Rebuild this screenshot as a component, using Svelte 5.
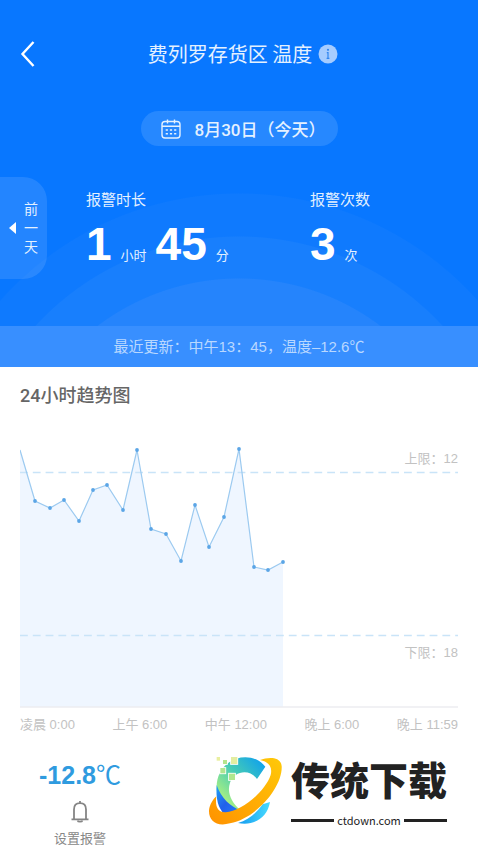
<script lang="ts">
	type Point = { x: number; y: number };

	const points: Point[] = [
		{ x: 0, y: 10 },
		{ x: 15, y: 61 },
		{ x: 30, y: 68 },
		{ x: 44, y: 60 },
		{ x: 59, y: 81 },
		{ x: 73, y: 50 },
		{ x: 87, y: 45 },
		{ x: 103, y: 70 },
		{ x: 117, y: 10 },
		{ x: 131, y: 89 },
		{ x: 146, y: 94 },
		{ x: 161, y: 121 },
		{ x: 175, y: 65 },
		{ x: 189, y: 107 },
		{ x: 204, y: 77 },
		{ x: 219, y: 9 },
		{ x: 234, y: 127 },
		{ x: 248, y: 130 },
		{ x: 263, y: 122 }
	];

	const baseline = 267;
	const times = ['凌晨 0:00', '上午 6:00', '中午 12:00', '晚上 6:00', '晚上 11:59'];

	let line = $derived(points.map((p) => `${p.x},${p.y}`).join(' '));
	let area = $derived(`0,${baseline} ${line} ${points[points.length - 1].x},${baseline}`);
</script>

<main>
	<header>
		<nav>
			<button class="back" aria-label="返回">
				<svg width="16" height="28" viewBox="0 0 16 28">
					<path d="M13.5 2 2.5 14l11 12" fill="none" stroke="#fff" stroke-width="2.4" />
				</svg>
			</button>
			<h1>
				费列罗存货区 温度
				<button class="info" aria-label="说明">
					<svg width="20" height="20" viewBox="0 0 20 20">
						<circle cx="10" cy="10" r="9.5" fill="#a5ccff" />
						<circle cx="10" cy="5.8" r="1.1" fill="#3186f0" />
						<path d="M8.8 8.6H10v5.6M8.6 14.4h2.8" fill="none" stroke="#3186f0" stroke-width="1.2" />
					</svg>
				</button>
			</h1>
		</nav>

		<button class="date">
			<svg width="20" height="20" viewBox="0 0 20 20" fill="none" stroke="#e4f1ff" stroke-width="1.4">
				<rect x="1" y="2.5" width="18" height="16.5" rx="3" />
				<path d="M1 7.2h18M6.5 .5v4M13.5 .5v4" />
				<path d="M4.7 11h2.2m2 0h2.2m2 0h2.2M4.7 14.7h2.2m2 0h2.2m2 0h2.2" stroke-width="1.6" />
			</svg>
			8月30日（今天）
		</button>

		<div class="summary">
			<button class="prev">
				<svg width="7" height="12" viewBox="0 0 7 12"><path d="M7 0v12L0 6z" fill="#fff" /></svg>
				<span>前一天</span>
			</button>
			<dl>
				<div>
					<dt>报警时长</dt>
					<dd><b>1</b><span>小时</span><b>45</b><span>分</span></dd>
				</div>
				<div>
					<dt>报警次数</dt>
					<dd><b>3</b><span>次</span></dd>
				</div>
			</dl>
		</div>

		<p class="updated">最近更新：中午13：45，温度–12.6℃</p>
	</header>

	<section>
		<h2>24小时趋势图</h2>
		<svg class="chart" viewBox="0 0 438 270" role="img" aria-label="24小时趋势图">
			<polygon points={area} fill="#eff6ff" />
			<line class="limit" x1="0" y1="32.5" x2="438" y2="32.5" />
			<line class="limit" x1="0" y1="195.5" x2="438" y2="195.5" />
			<line x1="0" y1={baseline} x2="438" y2={baseline} stroke="#ededf0" stroke-width="1.4" />
			<polyline points={line} fill="none" stroke="#9ccaf0" stroke-width="1.2" />
			{#each points.slice(1) as p}
				<circle cx={p.x} cy={p.y} r="1.9" fill="#5ba5e6" />
			{/each}
			<text x="438" y="23">上限：12</text>
			<text x="438" y="217">下限：18</text>
		</svg>
		<div class="times">
			{#each times as time}
				<span>{time}</span>
			{/each}
		</div>
	</section>

	<footer>
		<div class="current">
			<p><b>-12.8</b>℃</p>
			<button class="alarm">
				<svg width="20" height="24" viewBox="0 0 20 24" fill="none" stroke="#858585" stroke-width="1.8">
					<path d="M4 19V9.5C4 5.5 6.5 3.2 10 3.2s6 2.3 6 6.3V19M1.5 19.3h17M10 1v2" />
					<path d="M7.6 20.5c.4 1.6 4.4 1.6 4.8 0" />
				</svg>
				设置报警
			</button>
		</div>

		<a class="brand" href="#ctdown">
			<svg width="76" height="72" viewBox="22 15 228 216">
				<defs>
					<linearGradient id="c-top" x1="0" y1="1" x2="1" y2="0">
						<stop offset="0.2" stop-color="#a0ed86" />
						<stop offset="0.55" stop-color="#46cbb5" />
						<stop offset="1" stop-color="#079bf5" />
					</linearGradient>
					<linearGradient id="c-side" x1="0" y1="0" x2="1" y2="1">
						<stop offset="0" stop-color="#20a4f5" />
						<stop offset="0.5" stop-color="#2160ea" />
						<stop offset="1" stop-color="#247cff" />
					</linearGradient>
					<linearGradient id="c-base" x1="0" y1="0" x2="1" y2="0">
						<stop offset="0" stop-color="#149aef" />
						<stop offset="1" stop-color="#48dbff" />
					</linearGradient>
					<linearGradient id="ring" x1="0" y1="1" x2="1" y2="0">
						<stop offset="0" stop-color="#ff9200" />
						<stop offset="1" stop-color="#ffc908" />
					</linearGradient>
				</defs>
				<path
					d="M194 53C175 28 140 18 107 29C68 42 46 78 48 120C52 158 80 186 120 184C92 162 78 130 88 101C100 67 145 57 169 90Z"
					fill="url(#c-top)"
				/>
				<path d="M48 108C45 148 52 178 72 196L120 184C88 172 62 148 48 108Z" fill="url(#c-side)" />
				<path d="M208 159C200 206 160 232 112 222C142 212 166 194 186 166Z" fill="url(#c-base)" />
				<path
					d="M178 33C203 24 240 22 243 51C247 110 172 206 88 223C48 234 24 216 25 184C27 166 37 151 47 142C43 171 50 191 75 190C121 188 193 129 210 78C216 55 205 38 178 33Z"
					fill="url(#ring)"
				/>
				<g stroke="#fff" stroke-width="5" paint-order="stroke">
					<rect x="48" y="24" width="10" height="11" fill="#e9efa0" />
					<rect x="67" y="33" width="12" height="12" fill="#b6e48c" />
					<rect x="91" y="24" width="19" height="21" fill="#e3eda0" />
					<rect x="59" y="57" width="15" height="16" fill="#b2e590" />
					<rect x="85" y="74" width="18" height="19" fill="#b1e78e" />
				</g>
			</svg>
			<span class="wordmark">
				<strong>传统下载</strong>
				<small>ctdown.com</small>
			</span>
		</a>
	</footer>
</main>

<style>
	:global(body) {
		margin: 0;
		background: #fff;
		font-family: 'Liberation Sans', 'Noto Sans CJK SC', sans-serif;
	}

	h1,
	h2,
	p,
	dl,
	dd {
		margin: 0;
	}

	button {
		padding: 0;
		border: none;
		background: none;
		color: inherit;
		font: inherit;
		cursor: pointer;
	}

	svg {
		display: block;
		flex: none;
	}

	header {
		padding-top: 36px;
		color: #e4f1ff;
		background: radial-gradient(
			circle at 50% 513px,
			#2584fc 234px,
			#187ffd 235px 276px,
			#0f7afe 277px 319px,
			#0877ff 320px
		);
	}

	nav {
		display: grid;
		grid-template-columns: 40px 1fr 32px;
		align-items: center;
		height: 36px;
		padding: 0 20px;
	}

	h1 {
		display: flex;
		align-items: center;
		justify-content: center;
		gap: 6px;
		font-family: 'Noto Sans CJK SC', sans-serif;
		font-size: 20px;
		font-weight: 400;
		line-height: 28px;
	}

	.date {
		display: flex;
		align-items: center;
		gap: 14px;
		height: 35px;
		margin: 39px auto 31px;
		padding: 0 12px 0 20px;
		border-radius: 18px;
		background: #2688ff;
		font-family: Roboto, 'Noto Sans CJK SC', sans-serif;
		font-size: 17px;
		font-weight: 500;
		white-space: nowrap;
	}

	.summary {
		display: flex;
		padding-bottom: 47px;
	}

	.prev {
		display: flex;
		align-items: center;
		justify-content: center;
		gap: 8px;
		width: 47px;
		height: 102px;
		border-radius: 0 24px 24px 0;
		background: rgba(255, 255, 255, 0.11);
		font-size: 14px;
		line-height: 19px;
	}

	.prev span {
		width: 14px;
	}

	dl {
		display: grid;
		flex: 1;
		grid-template-columns: 4fr 3fr;
		padding: 13px 0 0 39px;
	}

	dt {
		font-size: 15px;
		line-height: 20px;
	}

	dd {
		display: flex;
		align-items: baseline;
		gap: 9px;
		margin-top: 8px;
		font-size: 13px;
		line-height: 20px;
	}

	dd b {
		color: #fff;
		font-size: 46px;
		line-height: 52px;
	}

	.updated {
		background: #388fff;
		color: #b9d8ff;
		font-size: 15px;
		line-height: 41px;
		text-align: center;
	}

	section {
		padding: 17px 20px 0;
	}

	h2 {
		color: #666;
		font-family: Roboto, 'Noto Sans CJK SC', sans-serif;
		font-size: 18px;
		font-weight: 500;
		line-height: 24px;
	}

	.chart {
		width: 100%;
		margin-top: 32px;
	}

	.chart text {
		fill: #c2c2c2;
		font-size: 13px;
		text-anchor: end;
	}

	.limit {
		stroke: #c9e4f8;
		stroke-width: 1.6;
		stroke-dasharray: 7.8 5;
	}

	.times {
		display: flex;
		justify-content: space-between;
		margin-top: 5px;
		color: #c2c2c2;
		font-size: 13px;
		line-height: 20px;
	}

	footer {
		display: flex;
		align-items: flex-start;
		gap: 68px;
		padding: 19px 20px 0;
	}

	.current {
		display: flex;
		flex-direction: column;
		align-items: center;
		width: 120px;
		padding-top: 6px;
	}

	.current p {
		color: #2f9bdf;
		font-size: 25px;
		line-height: 30px;
	}

	.alarm {
		display: flex;
		flex-direction: column;
		align-items: center;
		gap: 6px;
		margin-top: 10px;
		color: #888;
		font-size: 13px;
		line-height: 18px;
	}

	.brand {
		display: flex;
		gap: 7px;
		color: #222;
		text-decoration: none;
	}

	.wordmark {
		display: flex;
		flex-direction: column;
		gap: 10px;
		padding-top: 2px;
		font-family: 'Noto Sans CJK SC', sans-serif;
	}

	strong {
		font-size: 39px;
		font-weight: 900;
		line-height: 44px;
		white-space: nowrap;
	}

	small {
		display: flex;
		align-items: center;
		gap: 3px;
		font-family: 'Noto Sans CJK SC', sans-serif;
		font-size: 11px;
		line-height: 20px;
	}

	small::before,
	small::after {
		flex: 1;
		height: 3px;
		background: #222;
		content: '';
	}
</style>
